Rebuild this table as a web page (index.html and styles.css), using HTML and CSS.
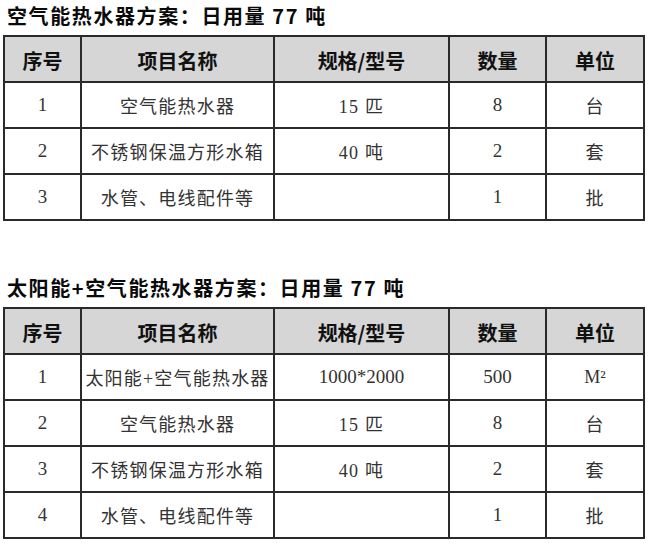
FILE: index.html
```html
<!DOCTYPE html>
<html lang="zh-CN">
<head>
<meta charset="utf-8">
<title>热水器方案</title>
<link rel="stylesheet" href="styles.css">
</head>
<body>
<section class="plan">
  <h2 class="plan-title">空气能热水器方案：日用量 77 吨</h2>
  <table class="spec">
    <colgroup>
      <col class="c-no"><col class="c-name"><col class="c-model"><col class="c-qty"><col class="c-unit">
    </colgroup>
    <thead>
      <tr><th>序号</th><th>项目名称</th><th>规格/型号</th><th>数量</th><th>单位</th></tr>
    </thead>
    <tbody>
      <tr><td class="num">1</td><td>空气能热水器</td><td>15 匹</td><td class="num">8</td><td>台</td></tr>
      <tr><td class="num">2</td><td>不锈钢保温方形水箱</td><td>40 吨</td><td class="num">2</td><td>套</td></tr>
      <tr><td class="num">3</td><td>水管、电线配件等</td><td></td><td class="num">1</td><td>批</td></tr>
    </tbody>
  </table>
</section>
<section class="plan plan--second">
  <h2 class="plan-title">太阳能+空气能热水器方案：日用量 77 吨</h2>
  <table class="spec">
    <colgroup>
      <col class="c-no"><col class="c-name"><col class="c-model"><col class="c-qty"><col class="c-unit">
    </colgroup>
    <thead>
      <tr><th>序号</th><th>项目名称</th><th>规格/型号</th><th>数量</th><th>单位</th></tr>
    </thead>
    <tbody>
      <tr><td class="num">1</td><td>太阳能+空气能热水器</td><td class="num">1000*2000</td><td class="num">500</td><td class="unit-m">M²</td></tr>
      <tr><td class="num">2</td><td>空气能热水器</td><td>15 匹</td><td class="num">8</td><td>台</td></tr>
      <tr><td class="num">3</td><td>不锈钢保温方形水箱</td><td>40 吨</td><td class="num">2</td><td>套</td></tr>
      <tr><td class="num">4</td><td>水管、电线配件等</td><td></td><td class="num">1</td><td>批</td></tr>
    </tbody>
  </table>
</section>
</body>
</html>
```

FILE: styles.css
```css
html, body {
  margin: 0;
  padding: 0;
  background: #ffffff;
}

body {
  padding-left: 3px;
  font-family: "Noto Sans CJK SC", "Noto Sans", sans-serif;
  color: #111;
}

.plan-title {
  margin: 0 0 3px 4px;
  height: 32px;
  font-size: 20px;
  line-height: 31px;
  font-weight: 700;
  letter-spacing: 1.6px;
  color: #0a0a0a;
  white-space: nowrap;
}

.plan--second {
  margin-top: 51px;
}

.spec {
  border-collapse: collapse;
  table-layout: fixed;
  width: 640px;
}

.c-no { width: 77px; }
.c-name { width: 193px; }
.c-model { width: 175px; }
.c-qty { width: 97px; }
.c-unit { width: 98px; }

.spec th,
.spec td {
  border: 2px solid #2a2a2a;
  text-align: center;
  vertical-align: middle;
  padding: 0;
  white-space: nowrap;
}

.spec th {
  height: 42px;
  padding-top: 2px;
  background: #d6d6d6;
  font-size: 20px;
  font-weight: 700;
  color: #111;
}

.spec td {
  height: 44px;
  font-family: "Liberation Serif", "Noto Sans CJK SC", serif;
  font-size: 18px;
  letter-spacing: 1.2px;
  color: #333;
}

.spec td.num {
  font-size: 19px;
  letter-spacing: 0;
}

.spec td.unit-m {
  font-size: 18px;
  letter-spacing: 0;
}
```
